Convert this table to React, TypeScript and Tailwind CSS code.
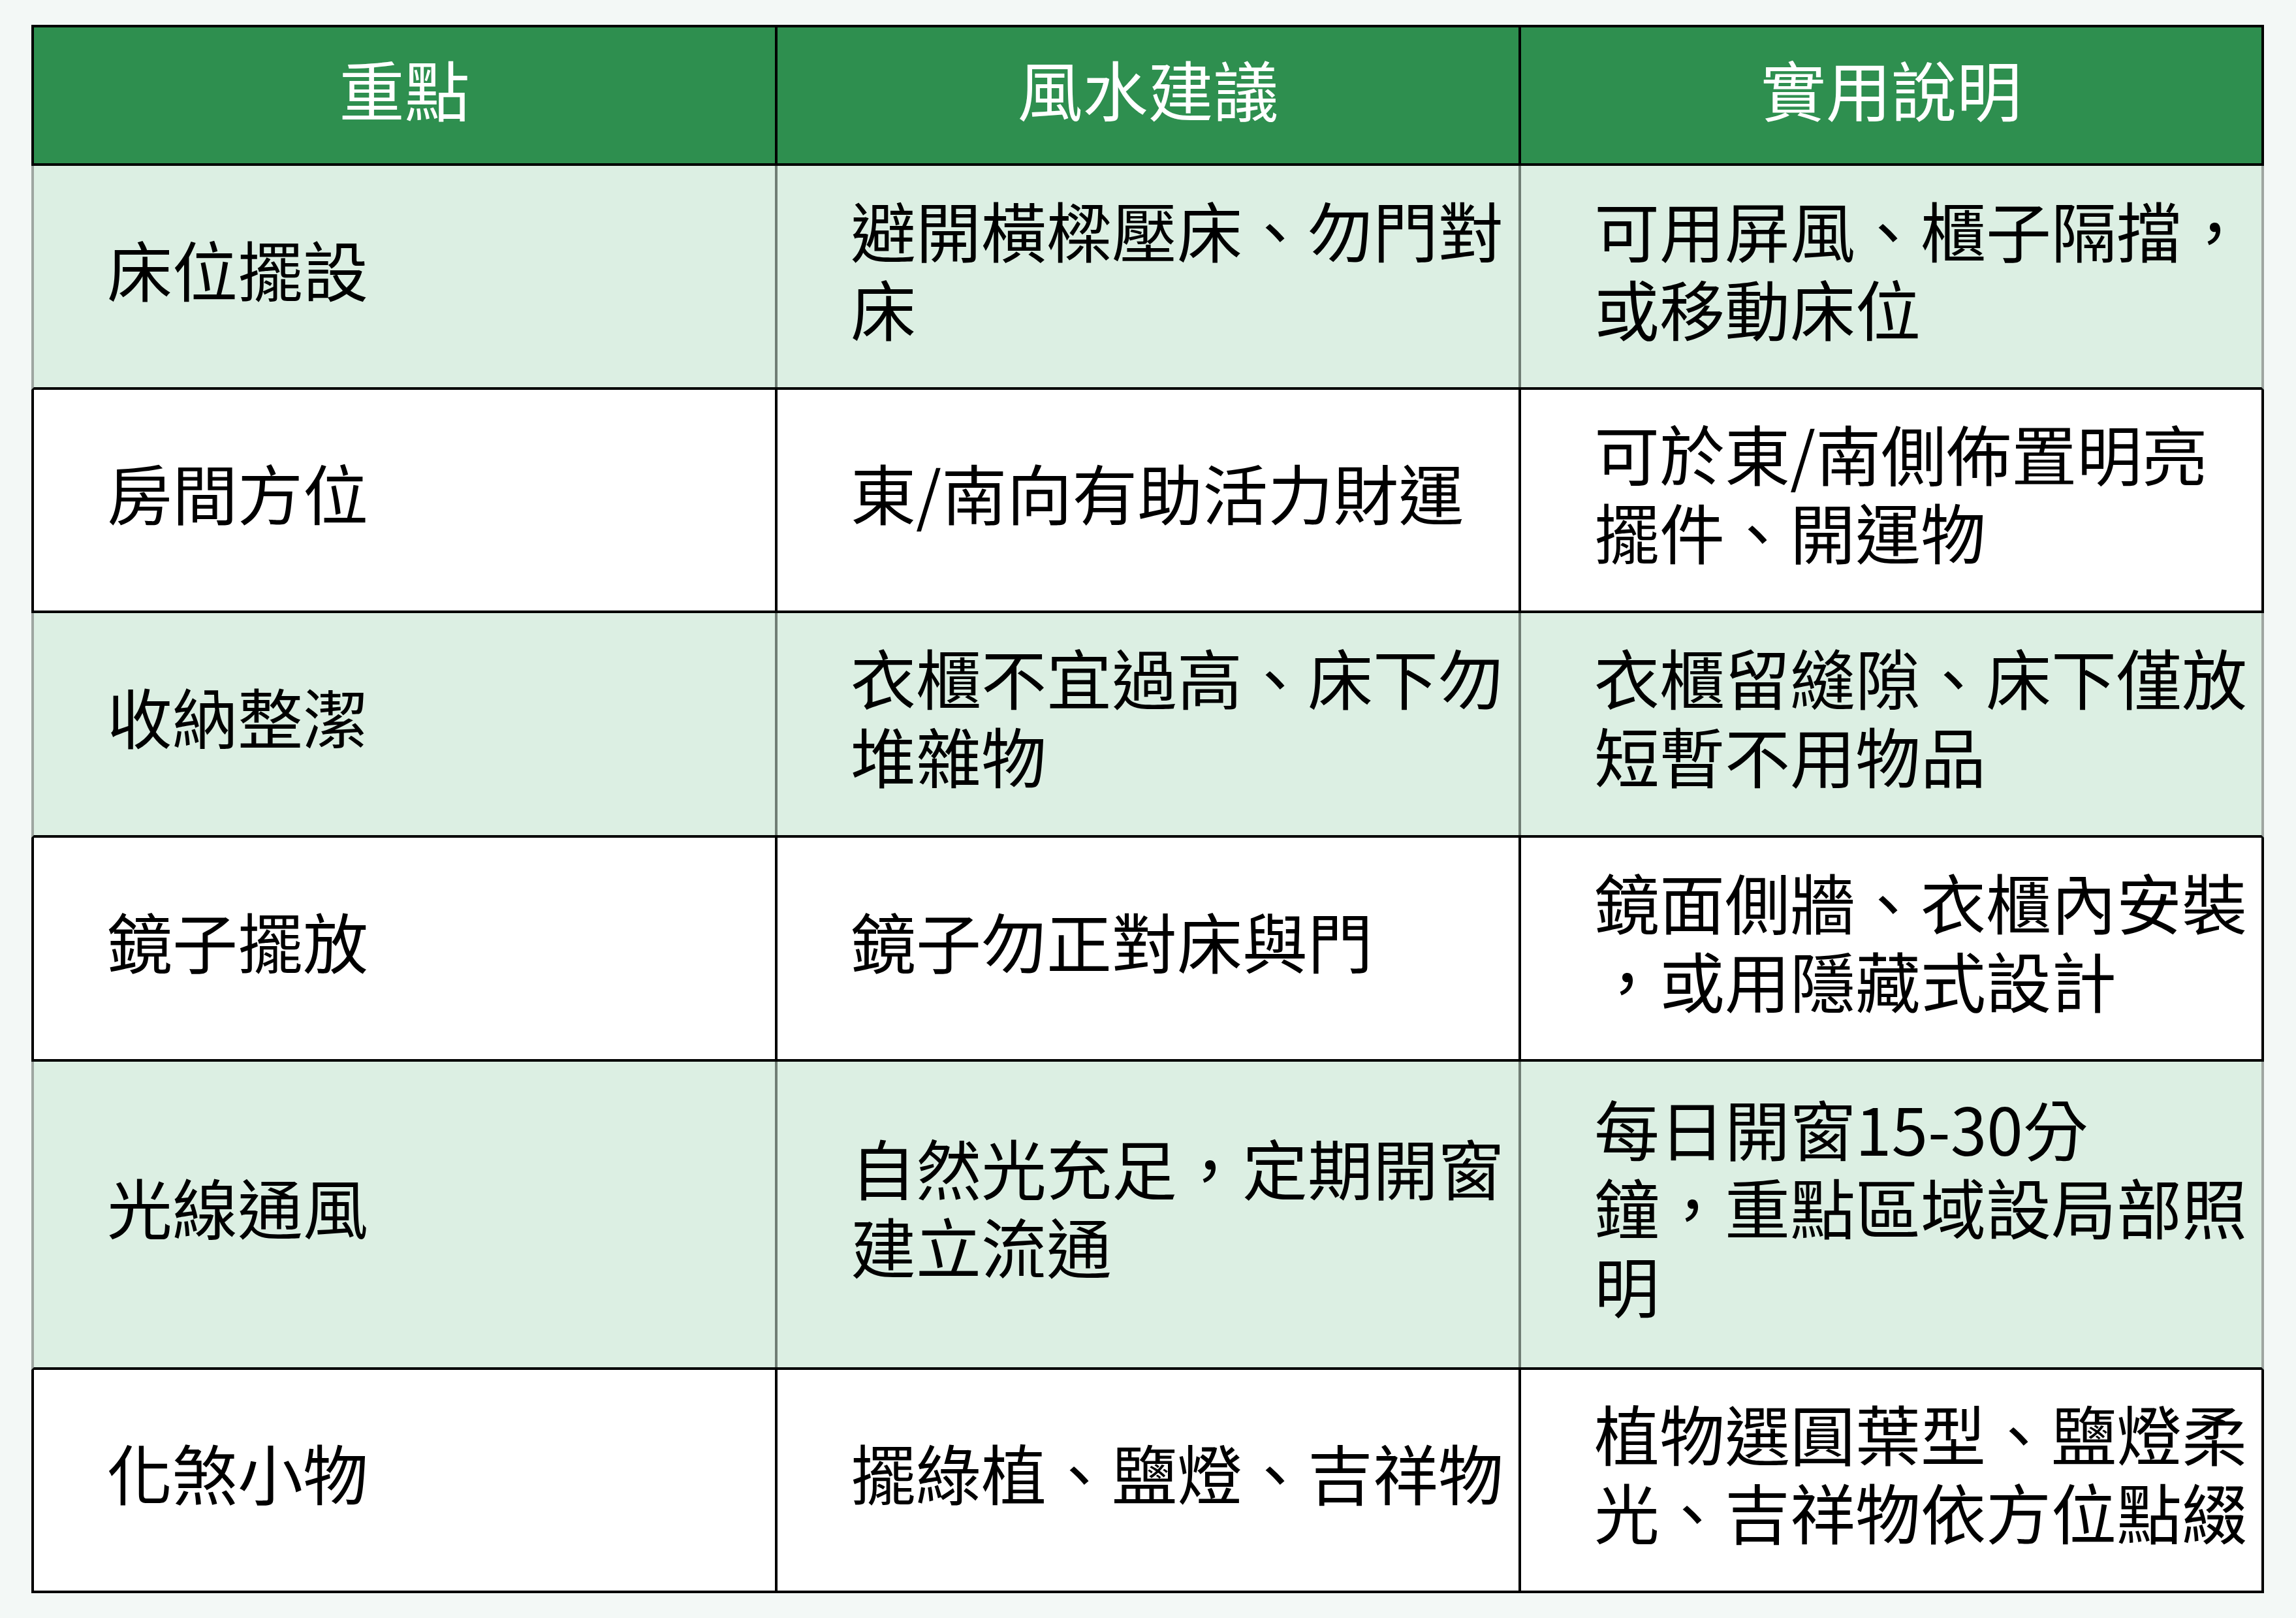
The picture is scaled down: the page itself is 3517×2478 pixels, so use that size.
import React from "react";

type Row = {
  h: string;
  green: boolean;
  cells: string[][];
};

const rows: Row[] = [
  {
    h: "h-[343px]",
    green: true,
    cells: [["床位擺設"], ["避開橫樑壓床、勿門對", "床"], ["可用屏風、櫃子隔擋，", "或移動床位"]],
  },
  {
    h: "h-[342px]",
    green: false,
    cells: [["房間方位"], ["東/南向有助活力財運"], ["可於東/南側佈置明亮", "擺件、開運物"]],
  },
  {
    h: "h-[344px]",
    green: true,
    cells: [["收納整潔"], ["衣櫃不宜過高、床下勿", "堆雜物"], ["衣櫃留縫隙、床下僅放", "短暫不用物品"]],
  },
  {
    h: "h-[343px]",
    green: false,
    cells: [["鏡子擺放"], ["鏡子勿正對床與門"], ["鏡面側牆、衣櫃內安裝", "，或用隱藏式設計"]],
  },
  {
    h: "h-[472px]",
    green: true,
    cells: [["光線通風"], ["自然光充足，定期開窗", "建立流通"], ["每日開窗15-30分", "鐘，重點區域設局部照", "明"]],
  },
  {
    h: "h-[342px]",
    green: false,
    cells: [["化煞小物"], ["擺綠植、鹽燈、吉祥物"], ["植物選圓葉型、鹽燈柔", "光、吉祥物依方位點綴"]],
  },
];

const headers = ["重點", "風水建議", "實用說明"];

export default function App() {
  return (
    <div
      className="w-[3517px] h-[2478px] bg-[#f3f8f6] pt-[38px] pl-[48px]"
      style={{ fontFamily: '"Noto Sans CJK TC", "Noto Sans", sans-serif' }}
    >
      <div className="w-[3420px] flex flex-col">
        {/* header */}
        <div className="h-[216px] bg-[#2e8f4f] border-4 border-black grid grid-cols-[1135px_1139px_1138px]">
          {headers.map((t, i) => (
            <div
              key={t}
              className={`flex items-center justify-center pb-[22px] text-white text-[100px] leading-[120px] ${
                i > 0 ? "border-l-4 border-black" : ""
              }`}
            >
              {t}
            </div>
          ))}
        </div>
        {rows.map((r, ri) => (
          <div
            key={ri}
            className={`${r.h} border-b-4 border-black border-x-4 grid grid-cols-[1135px_1139px_1138px] ${
              r.green ? "bg-[#dcefe3] border-x-[#9ea6a1]" : "bg-white border-x-black"
            }`}
          >
            {r.cells.map((lines, ci) => (
              <div
                key={ci}
                className={`flex items-center pl-[112px] pb-[26px] text-black text-[100px] leading-[120px] whitespace-nowrap ${
                  ci > 0 ? (r.green ? "border-l-4 border-[#6f7d74]" : "border-l-4 border-black") : ""
                }`}
              >
                <div>
                  {lines.map((l, li) => (
                    <div key={li}>{l}</div>
                  ))}
                </div>
              </div>
            ))}
          </div>
        ))}
      </div>
    </div>
  );
}
